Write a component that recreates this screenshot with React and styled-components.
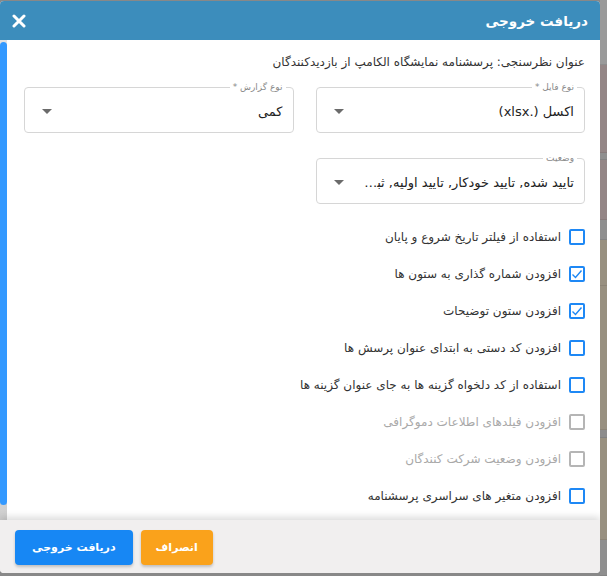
import React from "react";
import styled, { createGlobalStyle } from "styled-components";

const Global = createGlobalStyle`
  html, body { margin: 0; padding: 0; }
  body { background: #8e8e8e; font-family: "DejaVu Sans", sans-serif; }
  * { box-sizing: border-box; }
`;

const Page = styled.div`
  display: flex;
  width: 607px;
  height: 576px;
  overflow: hidden;
  background: #888;
`;

const Modal = styled.div`
  direction: rtl;
  width: 600px;
  height: 572px;
  margin-top: 1px;
  display: flex;
  flex-direction: column;
  border-radius: 4px;
  overflow: hidden;
  background: #fff;
  flex-shrink: 0;
`;

const Strip = styled.div`
  flex: 1;
  display: flex;
  flex-direction: column;
`;

const StripBlock = styled.div`
  height: ${(p) => p.h}px;
  background: ${(p) => p.c};
  border-bottom: 1px solid rgba(0,0,0,0.08);
`;

const Header = styled.div`
  height: 39px;
  flex-shrink: 0;
  background: #3c8dbc;
  display: flex;
  align-items: center;
  justify-content: space-between;
  padding: 0 12px 0 12px;
  color: #fff;
`;

const Title = styled.div`
  font-size: 13.5px;
  font-weight: bold;
`;

const Close = styled.button`
  border: 0;
  background: transparent;
  padding: 0;
  display: flex;
  color: #fff;
  cursor: pointer;
`;

const BodyWrap = styled.div`
  flex: 1;
  min-height: 0;
  display: flex;
  background: #fff;
`;

const Body = styled.div`
  flex: 1;
  overflow: hidden;
`;

const Rail = styled.div`
  width: 7px;
  flex-shrink: 0;
  background: linear-gradient(#e2e2e2, #d0d0d0);
  display: flex;
  flex-direction: column;
  padding-top: 2px;
`;

const Thumb = styled.div`
  height: 463px;
  background: #3399ff;
  border-radius: 4px;
`;

const Content = styled.div`
  padding: 12px 15px 22px 17px;
`;

const SurveyTitle = styled.div`
  font-size: 12px;
  line-height: 20px;
  color: #333;
  margin-bottom: 10px;
`;

const Grid = styled.div`
  display: grid;
  grid-template-columns: 1fr 1fr;
  column-gap: 22px;
  row-gap: 20px;
`;

const Field = styled.fieldset`
  margin: 0;
  border: 1px solid #d6d6d6;
  border-radius: 4px;
  padding: 0 10px 0 17px;
  height: 51px;
  display: flex;
  align-items: center;
  gap: 10px;
  min-width: 0;
`;

const Legend = styled.legend`
  font-size: 9px;
  color: #8a8a8a;
  padding: 0 3px;
  margin-right: -3px;
  line-height: 10px;
`;

const Value = styled.div`
  flex: 1;
  min-width: 0;
  font-size: 13px;
  color: #222;
  white-space: nowrap;
  overflow: hidden;
  text-overflow: ellipsis;
  margin-top: -2px;
`;

const Arrow = styled.span`
  width: 0;
  height: 0;
  border-left: 5px solid transparent;
  border-right: 5px solid transparent;
  border-top: 5px solid #6b6b6b;
  flex-shrink: 0;
  margin-top: -2px;
`;

const Checks = styled.div`
  margin-top: 14px;
  display: flex;
  flex-direction: column;
`;

const Row = styled.label`
  height: 37px;
  display: flex;
  align-items: center;
  gap: 8px;
  font-size: 12px;
  color: ${(p) => (p.disabled ? "#a9a9a9" : "#333")};
`;

const Box = styled.span`
  width: 16px;
  height: 16px;
  border: 2px solid ${(p) => (p.disabled ? "#b5b5b5" : "#1e88f5")};
  border-radius: 2px;
  display: flex;
  align-items: center;
  justify-content: center;
  flex-shrink: 0;
`;

const Footer = styled.div`
  height: 53px;
  flex-shrink: 0;
  background: #f1efef;
  box-shadow: 0 -3px 7px rgba(0, 0, 0, 0.14);
  position: relative;
  display: flex;
  justify-content: flex-end;
  align-items: center;
  gap: 8px;
  padding: 0 15px;
`;

const Button = styled.button`
  height: 35px;
  border: 0;
  border-radius: 4px;
  padding: 0 ${(p) => p.px}px;
  background: ${(p) => p.bg};
  color: #fff;
  font-family: "DejaVu Sans", sans-serif;
  font-weight: bold;
  font-size: 11px;
  box-shadow: 0 2px 3px rgba(0, 0, 0, 0.2);
  margin-top: 2px;
`;

const Check = () => (
  <svg width="12" height="12" viewBox="0 0 12 12">
    <polyline points="1.5,6.5 4.5,9.5 10.5,2.5" fill="none" stroke="#1e88f5" strokeWidth="1.4" />
  </svg>
);

const options = [
  { t: "استفاده از فیلتر تاریخ شروع و پایان" },
  { t: "افزودن شماره گذاری به ستون ها", c: true },
  { t: "افزودن ستون توضیحات", c: true },
  { t: "افزودن کد دستی به ابتدای عنوان پرسش ها" },
  { t: "استفاده از کد دلخواه گزینه ها به جای عنوان گزینه ها" },
  { t: "افزودن فیلدهای اطلاعات دموگرافی", d: true },
  { t: "افزودن وضعیت شرکت کنندگان", d: true },
  { t: "افزودن متغیر های سراسری پرسشنامه" },
];

const strip = [
  [65, "#9a9a9a"],
  [88, "#948686"],
  [7, "#8f8f8f"],
  [60, "#948686"],
  [20, "#8f8f8f"],
  [46, "#989080"],
  [144, "#989080"],
  [8, "#8c8c8c"],
  [102, "#989080"],
  [36, "#8f8f8f"],
];

export default function App() {
  return (
    <>
      <Global />
      <Page>
        <Modal>
          <Header>
            <Title>دریافت خروجی</Title>
            <Close aria-label="close">
              <svg width="14" height="14" viewBox="0 0 14 14">
                <path d="M2 2 L12 12 M12 2 L2 12" stroke="#fff" strokeWidth="3" strokeLinecap="round" />
              </svg>
            </Close>
          </Header>
          <BodyWrap>
            <Body>
              <Content>
                <SurveyTitle>عنوان نظرسنجی: پرسشنامه نمایشگاه الکامپ از بازدیدکنندگان</SurveyTitle>
                <Grid>
                  <Field>
                    <Legend>نوع فایل *</Legend>
                    <Value>اکسل (.xlsx)</Value>
                    <Arrow />
                  </Field>
                  <Field>
                    <Legend>نوع گزارش *</Legend>
                    <Value>کمی</Value>
                    <Arrow />
                  </Field>
                  <Field>
                    <Legend>وضعیت</Legend>
                    <Value>تایید شده, تایید خودکار, تایید اولیه, ثبت شده</Value>
                    <Arrow />
                  </Field>
                </Grid>
                <Checks>
                  {options.map((o) => (
                    <Row key={o.t} disabled={o.d}>
                      <Box disabled={o.d}>{o.c && <Check />}</Box>
                      {o.t}
                    </Row>
                  ))}
                </Checks>
              </Content>
            </Body>
            <Rail>
              <Thumb />
            </Rail>
          </BodyWrap>
          <Footer>
            <Button bg="#faa21b" px={15}>انصراف</Button>
            <Button bg="#1787f4" px={17}>دریافت خروجی</Button>
          </Footer>
        </Modal>
        <Strip>
          {strip.map(([h, c], i) => (
            <StripBlock key={i} h={h} c={c} />
          ))}
        </Strip>
      </Page>
    </>
  );
}
